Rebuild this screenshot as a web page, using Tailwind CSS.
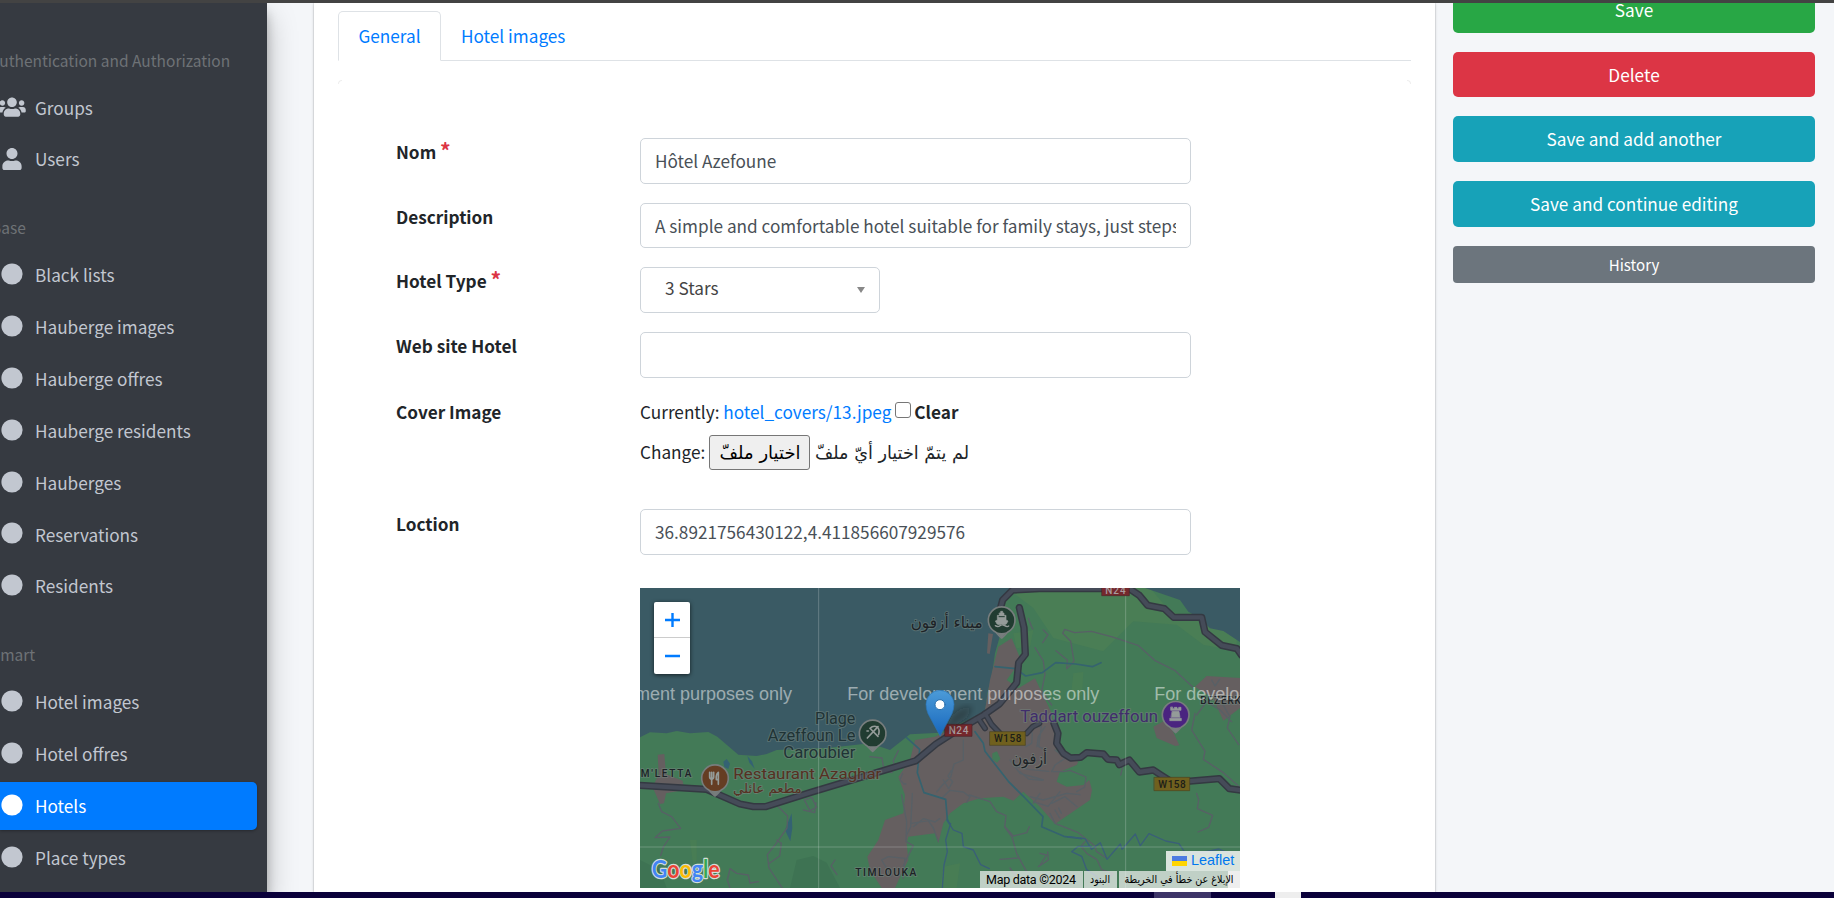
<!DOCTYPE html>
<html lang="en">
<head>
<meta charset="utf-8">
<title>Hotels | Change hotel</title>
<script src="https://cdn.jsdelivr.net/npm/@tailwindcss/browser@4"></script>
</head>
<body class="w-[1834px] h-[898px] overflow-hidden flex flex-col bg-[#f4f6f9] font-['Noto_Sans_CJK_SC','DejaVu_Sans',sans-serif] text-[17.200px] text-[#212529]">
<svg class="hidden">
  <symbol id="dot" viewBox="0 0 22 22"><circle cx="11" cy="11" r="10.6" fill="currentColor"/></symbol>
  <symbol id="users" viewBox="0 0 640 512"><path fill="currentColor" d="M96 224c35.300 0 64-28.700 64-64s-28.700-64-64-64-64 28.700-64 64 28.700 64 64 64zm448 0c35.300 0 64-28.700 64-64s-28.700-64-64-64-64 28.700-64 64 28.700 64 64 64zm32 32h-64c-17.600 0-33.500 7.100-45.100 18.600 40.300 22.100 68.900 62 75.100 109.400h66c17.700 0 32-14.300 32-32v-32c0-35.300-28.700-64-64-64zm-256 0c61.900 0 112-50.100 112-112S381.900 32 320 32 208 82.100 208 144s50.100 112 112 112zm76.800 32h-8.300c-20.800 10-43.900 16-68.500 16s-47.600-6-68.500-16h-8.300C179.600 288 128 339.600 128 403.200V432c0 26.500 21.500 48 48 48h288c26.500 0 48-21.500 48-48v-28.800c0-63.600-51.600-115.200-115.200-115.200zm-223.700-13.400C161.500 263.100 145.600 256 128 256H64c-35.300 0-64 28.700-64 64v32c0 17.700 14.300 32 32 32h65.900c6.300-47.400 34.900-87.300 75.200-109.400z"/></symbol>
  <symbol id="user" viewBox="0 0 448 512"><path fill="currentColor" d="M224 256c70.700 0 128-57.300 128-128S294.700 0 224 0 96 57.300 96 128s57.300 128 128 128zm89.600 32h-16.700c-22.200 10.200-46.900 16-72.900 16s-50.600-5.800-72.900-16h-16.700C60.200 288 0 348.200 0 422.400V464c0 26.500 21.500 48 48 48h352c26.500 0 48-21.500 48-48v-41.600c0-74.200-60.200-134.400-134.400-134.400z"/></symbol>
</svg>
<div class="h-[3px] shrink-0 bg-[#434343] relative z-20"></div>
<div class="flex flex-1 min-h-0">

  <aside class="w-[267px] shrink-0 bg-[#363a41] text-[#c2c7d0] pt-[16.300px] overflow-hidden relative z-10 shadow-[0_14px_28px_rgba(0,0,0,.25),0_10px_10px_rgba(0,0,0,.22)]">
    <div class="h-[64.200px] pt-[30.300px] text-[15.500px] leading-[20px] text-[#6e7276] whitespace-nowrap"><span class="-ml-[10px]">Authentication and Authorization</span></div>
    <nav class="flex flex-col gap-[3.840px] mb-[3.840px]">
      <a class="h-12 flex items-center"><span class="w-[35px] shrink-0"><svg class="w-[28px] h-[22px] -ml-[2px]"><use href="#users"/></svg></span>Groups</a>
      <a class="h-12 flex items-center"><span class="w-[35px] shrink-0"><svg class="w-[20px] h-[22px] ml-[2px]"><use href="#user"/></svg></span>Users</a>
    </nav>
    <div class="h-[64.200px] pt-[30.300px] text-[15.500px] leading-[20px] text-[#6e7276]"><span class="-ml-[9px]">Base</span></div>
    <nav class="flex flex-col gap-[3.840px] mb-[3.840px]">
      <a class="h-12 flex items-center"><span class="w-[35px] shrink-0"><svg class="size-[22px] ml-px -mt-[2px]"><use href="#dot"/></svg></span>Black lists</a>
      <a class="h-12 flex items-center"><span class="w-[35px] shrink-0"><svg class="size-[22px] ml-px -mt-[2px]"><use href="#dot"/></svg></span>Hauberge images</a>
      <a class="h-12 flex items-center"><span class="w-[35px] shrink-0"><svg class="size-[22px] ml-px -mt-[2px]"><use href="#dot"/></svg></span>Hauberge offres</a>
      <a class="h-12 flex items-center"><span class="w-[35px] shrink-0"><svg class="size-[22px] ml-px -mt-[2px]"><use href="#dot"/></svg></span>Hauberge residents</a>
      <a class="h-12 flex items-center"><span class="w-[35px] shrink-0"><svg class="size-[22px] ml-px -mt-[2px]"><use href="#dot"/></svg></span>Hauberges</a>
      <a class="h-12 flex items-center"><span class="w-[35px] shrink-0"><svg class="size-[22px] ml-px -mt-[2px]"><use href="#dot"/></svg></span>Reservations</a>
      <a class="h-12 flex items-center"><span class="w-[35px] shrink-0"><svg class="size-[22px] ml-px -mt-[2px]"><use href="#dot"/></svg></span>Residents</a>
    </nav>
    <div class="h-[64.200px] pt-[30.300px] text-[15.500px] leading-[20px] text-[#6e7276]"><span class="-ml-[9px]">Smart</span></div>
    <nav class="flex flex-col gap-[3.840px]">
      <a class="h-12 flex items-center"><span class="w-[35px] shrink-0"><svg class="size-[22px] ml-px -mt-[2px]"><use href="#dot"/></svg></span>Hotel images</a>
      <a class="h-12 flex items-center"><span class="w-[35px] shrink-0"><svg class="size-[22px] ml-px -mt-[2px]"><use href="#dot"/></svg></span>Hotel offres</a>
      <a class="h-12 w-[257px] flex items-center bg-[#007bff] text-white rounded-r-[5px] shadow-[0_1px_3px_rgba(0,0,0,.3)]"><span class="w-[35px] shrink-0"><svg class="size-[22px] ml-px -mt-[2px]"><use href="#dot"/></svg></span>Hotels</a>
      <a class="h-12 flex items-center"><span class="w-[35px] shrink-0"><svg class="size-[22px] ml-px -mt-[2px]"><use href="#dot"/></svg></span>Place types</a>
    </nav>
  </aside>

  <main class="ml-[47px] w-[1121px] shrink-0 bg-white px-6 pt-2 shadow-[0_0_1px_rgba(0,0,0,.3),0_1px_3px_rgba(0,0,0,.2)]">
    <div class="flex h-[50px] border-b border-[#dee2e6] w-[1073px] text-[#007bff]">
      <a class="h-[50px] w-[103px] border border-b-white border-[#dee2e6] rounded-t-[5px] bg-white flex items-center justify-center">General</a>
      <a class="h-[50px] px-[20px] flex items-center">Hotel images</a>
    </div>
    <div class="flex justify-between mt-[19px] h-[4px] w-[1073px]"><i class="w-1 border-t border-l border-[#eee] rounded-tl-[4px]"></i><i class="w-1 border-t border-r border-[#eee] rounded-tr-[4px]"></i></div>

    <form class="pl-[58px] pt-[54px]">
      <div class="flex h-[64.500px]">
        <label class="w-[244px] leading-[27px] font-bold">Nom <span class="text-[#dc3545] text-[21px] leading-[20px]">*</span></label>
        <div class="w-[551px] h-[45.600px] border border-[#ced4da] rounded-[5px] px-[14px] flex items-center text-[#495057]">Hôtel Azefoune</div>
      </div>
      <div class="flex h-[64.800px]">
        <label class="w-[244px] leading-[27px] font-bold">Description</label>
        <div class="w-[551px] h-[45.600px] border border-[#ced4da] rounded-[5px] px-[14px] flex items-center text-[#495057]"><span class="overflow-hidden whitespace-nowrap leading-[29px]">A simple and comfortable hotel suitable for family stays, just steps away from the beach</span></div>
      </div>
      <div class="flex h-[64.800px]">
        <label class="w-[244px] leading-[28px] font-bold">Hotel Type <span class="text-[#dc3545] text-[21px] leading-[20px]">*</span></label>
        <div class="w-[240px] h-[45.600px] border border-[#ced4da] rounded-[5px] pl-6 pr-[14px] flex items-start justify-between text-[#444] leading-[39px]">3 Stars<svg class="w-[8px] h-[6px] mt-[19px]" viewBox="0 0 8 6"><path d="M0 0h8L4 6z" fill="#888"/></svg></div>
      </div>
      <div class="flex h-[64.800px]">
        <label class="w-[244px] leading-[28px] font-bold">Web site Hotel</label>
        <div class="w-[551px] h-[45.600px] border border-[#ced4da] rounded-[5px]"></div>
      </div>
      <div class="flex h-[112.200px]">
        <label class="w-[244px] leading-[29px] font-bold">Cover Image</label>
        <div class="flex-1">
          <div class="flex leading-[29px] whitespace-pre">Currently: <span class="text-[#007bff]">hotel_covers/13.jpeg</span><span class="size-4 ml-[4px] mt-[5px] border border-[#767676] rounded-[3px]"></span><b class="ml-[3px]">Clear</b></div>
          <div class="flex items-center h-[35px] mt-[9px] whitespace-pre">Change: <span dir="rtl" class="w-[101px] h-[35px] bg-[#efefef] border border-[#767676] rounded-[3px] text-black flex items-center justify-center"><svg class="w-[82px] h-[33px]"><text x="41" y="23" font-size="18" text-anchor="middle" textLength="81" lengthAdjust="spacingAndGlyphs" font-family="DejaVu Sans">اختيار ملفّ</text></svg></span><svg class="w-[156px] h-[33px] ml-[4px]"><text x="78" y="23" font-size="18" text-anchor="middle" textLength="154" lengthAdjust="spacingAndGlyphs" fill="#212529" font-family="DejaVu Sans">لم يتمّ اختيار أيّ ملفّ</text></svg></div>
        </div>
      </div>
      <div class="flex">
        <label class="w-[244px] leading-[29px] font-bold">Loction</label>
        <div>
          <div class="w-[551px] h-[45.600px] border border-[#ced4da] rounded-[5px] px-[14px] flex items-center text-[#495057]">36.8921756430122,4.411856607929576</div>
          <div class="relative w-[600px] h-[300px] mt-[33.300px] overflow-hidden">
            <svg class="block w-[600px] h-[300px]" viewBox="30 24 1800 900" fill="none" stroke-linecap="round" stroke-linejoin="round">
              <rect x="30" y="24" width="1800" height="900" fill="#437a57"/>
              <path fill="#3e7353" d="M500 840l50-12 40 20 40 76H480zM30 840l60 30 20 54H30z"/>
              <path fill="#4a7e55" d="M1130 24h430l60 70 200 60v60l-100-20-80-60-130-10-90 90-150-40-60-90z"/>
              <path fill="#4d7e52" d="M1330 280l30-4-4 70-34 10zM1150 160l60-10-10 50-40 5zM940 860l50-10-10 74h-50zM180 780l20 0 0 60-10 20z" opacity=".6"/>
              <path fill="#3a5a64" d="M30 24H1155L1120 45 1108 80 1115 150 1095 220 1085 290 1072 340 1065 400 1030 412 930 458 840 463 780 510 720 490 600 503 440 510 410 522 380 528 325 524 262 470 235 456 180 460 140 453 110 460 60 457 30 472zM1545 24l105 36 25 35 35 20 30 30 40 8 50 33V24z"/>
              <path fill="#655f60" d="M855 480L915 470 1025 418 1063 402 1080 300 1105 200 1145 175 1173 240 1130 300 1165 325 1215 295 1265 400 1280 515 1345 545 1340 555 1290 575 1280 605 1310 620 1360 615 1378 600 1386 630 1380 660 1275 732 1230 680 1180 635 1150 662 1120 650 1050 655 1000 670 960 700 940 730 925 790 915 760 835 770 830 790 835 840 815 880 795 924H755L720 870 712 830 745 780 765 720 820 700 825 645 805 590 840 540z"/>
              <path fill="#655f60" d="M83 524l20-2 5 60 50 20 5 28-55 10-6 30-12 2-22-50 18-40zM1075 160l14 2-10 60-8-2zM1570 440l42-22 36 78-12 2-56-24zM1695 320l35-32 100 6v90l-50 38-30-66z"/>
              <path fill="#437a57" d="M1087 520l14-6 10 22-10 12-14-10z"/>
              <path fill="#346273" d="M280 545l10-8 10 14-5 16-12-6zM352 528l6 20 16 18-8-22zM485 700l-20 50 16 34 6-40z"/>

              <g stroke="#586066" stroke-width="4">
                <path d="M85 670l10 25 30 15 27 35-55 8-22 20 45-2-20 30-8 26M445 680l28 28-2 36-35 50-24 30 5 40 40 60M440 780l14 10-5 38-34 24M523 660l22-8 15 30-20 10zM520 690l34 8 4-30M300 924l-8-24 8-34 20 14 35 5 5 24 25-4M615 840l-12 18 18 26M720 530l36 4 6 36 24 8M805 512l-15 30 5 28M815 645l15 80-2 60 22 12-30 60M847 640l-5 100-12 25M850 740l30-24 35 10 14-10M845 730l50-8 15 22 15 40M755 840l20-10 50 5-5 60M755 840l30 50M1000 480v60l-28 12-10 40-22 20-20 24M940 600l16 26 12-20-14-18 10-16M935 655l25-24 40 5 20 15-10 16M818 580l-8 20 12 12h6"/>
                <path d="M1195 115l10 26 4 6M1240 150l14 14-16 24M1215 203l25 40 5 40-10 50 30 42M1278 212l34 28-2 26 22-22-10-60-24-24 6-12 30 10 50-4 60 16 80 26 50 45 60 30 54 50M1018 645l62 20 20 30 28 12-4 34 22 30 14 50 30 54M1125 740l25 28 40-10 8-18M1110 838l55-4M1225 860l30-20-2-24M1140 864l45 60M1230 820l20 5-20 30M1245 440l-20 30-4 30M1220 440h14l-8 60 12 6M1195 450l12 10-2 30-18 10M1275 510l30 25-30 20-10 20M1160 560l36 8 60 6M1170 575l26 22 40 4M1140 540l30 40 50 14 20 6M1200 650l40 10 70-20 40 4M1210 665l44 14 36-44M1230 640l-20 30M1265 670l40-20 36 30M1300 575l20-4 48 20-4 30-24 14M1275 690l14 24M1286 684l8 16M1300 575l-30 0M1260 700l15 30 70 28 50 40 4 16 30 20M1365 785l-12 14 18 22 30 18 14 30 34 12-20 20 10 20M1700 640l6 20-4 26 46 20-12 36-32 14M1695 400l-10 50 40 64-5 24 60 40 50 44M1700 405l30-40 40 25 35 35M1765 350l35 60-8 34 34 50M1745 300l10 18 14-20M1472 585l10-40-8-10"/>
              </g>
              <g stroke="#35636f" stroke-width="5">
                <path d="M829 472l40 36-7 70 20 60 65 20 5 60 10 20"/>
                <path d="M1035 455l25 35 5 24 70 90 50 50 54 56-4 30 70 30 50 6M1095 260l62 6 30 22 50-10 40-30 60 4 50 8 26-12"/>
              </g>
              <path stroke="#3a5f78" stroke-width="4" d="M962 730l-15 50 5 35-10 40-5 69M950 720l20 30 26 10 4 40 30 10 22 44 26 12M1315 770l50 6 20 32 26-20 20 50 40-46 5 16 40-46 15 35 26-36 50 22 40 8 20 30 50-4 50-10 45 20M1325 815l20-16 40 0M1325 815l30 14 15 40 30 20 20 35"/>
              <g stroke="#343942" stroke-width="22">
                <path d="M30 616l200 12 100 44 40 8h36l140-44 240-72 72-22 60-50 70-45 70-40 50-35 20-24 32-40 6-60 20-25-4-80-14-60M1110 90l8-30 30-30 80-4h270l30 20 25 30 50 10 28 26h84l10 44 50 40 46 10 14 20 20 4M1272 430l12 30-4 30 20 30 22 14 30-2 18-14 50 4 14 16 26 2 8 14 30-14 30 36 42-6 18 12 40 26 70-6 70-6 30 30 44 6"/>
                <path stroke-width="18" d="M1065 400l20 34 34 36M1045 415l20 30M1190 460l18-20 20-10"/>
              </g>
              <g stroke="#454b58" stroke-width="13">
                <path d="M30 616l200 12 100 44 40 8h36l140-44 240-72 72-22 60-50 70-45 70-40 50-35 20-24 32-40 6-60 20-25-4-80-14-60M1110 90l8-30 30-30 80-4h270l30 20 25 30 50 10 28 26h84l10 44 50 40 46 10 14 20 20 4M1272 430l12 30-4 30 20 30 22 14 30-2 18-14 50 4 14 16 26 2 8 14 30-14 30 36 42-6 18 12 40 26 70-6 70-6 30 30 44 6"/>
                <path stroke-width="10" d="M1065 400l20 34 34 36M1045 415l20 30M1190 460l18-20 20-10"/>
              </g>
              <path stroke="#fff" stroke-opacity=".22" stroke-width="3" d="M566 24v900M1487 24v900M30 801h1800"/>

              <g fill="#1d2226" stroke="#75857f" stroke-opacity=".5" stroke-width="6" paint-order="stroke" font-family="Roboto, sans-serif">
                <g font-size="47" text-anchor="end" fill="#1f3335"><text x="676" y="431" textLength="121" lengthAdjust="spacingAndGlyphs">Plage</text><text x="676" y="482" textLength="263" lengthAdjust="spacingAndGlyphs">Azeffoun Le</text><text x="676" y="533" textLength="216" lengthAdjust="spacingAndGlyphs">Caroubier</text></g>
                <text x="310" y="598" font-size="46" textLength="444" lengthAdjust="spacingAndGlyphs" fill="#563022">Restaurant Azaghar</text>
                <text x="412" y="640" font-size="38" text-anchor="middle" textLength="206" lengthAdjust="spacingAndGlyphs" fill="#563022" font-family="DejaVu Sans">مطعم عائلي</text>
                <text x="32" y="592" font-size="30" font-weight="500" textLength="152">M'LETTA</text>
                <text x="676" y="887" font-size="31" font-weight="500" textLength="183">TIMLOUKA</text>
                <text x="1711" y="371" font-size="30" font-weight="500" textLength="144">BEZERKA</text>
                <text x="1171" y="425" font-size="47" textLength="413" lengthAdjust="spacingAndGlyphs" fill="#402d6b">Taddart ouzeffoun</text>
                <text x="950" y="145" font-size="48" text-anchor="middle" textLength="216" lengthAdjust="spacingAndGlyphs" font-family="DejaVu Sans">ميناء أزفون</text>
                <text x="1198" y="551" font-size="48" text-anchor="middle" textLength="106" lengthAdjust="spacingAndGlyphs" font-family="DejaVu Sans">أزفون</text>
              </g>
              <g font-family="Roboto, sans-serif" font-size="30" font-weight="500" stroke-width="2">
                <path fill="#75282d" stroke="#4d2429" d="M1416 8h82v39h-82zM945 433h81v36h-81z"/>
                <path fill="#70601e" stroke="#4b4320" d="M1080 455h106v41h-106zM1573 592h106v40h-106z"/>
                <g fill="#a79b9d"><text x="1426" y="41" textLength="61">N24</text><text x="956" y="461" textLength="59">N24</text></g>
                <g fill="#1c1d18"><text x="1092" y="486" textLength="82">W158</text><text x="1585" y="623" textLength="82">W158</text></g>
              </g>

              <g stroke="#777d7d" stroke-width="5">
                <path fill="#213c31" d="M728 514c-10-8-14-16-22-20a40 40 0 1 1 44 0c-8 4-12 12-22 20z"/>
                <path fill="#653d23" d="M255 648c-10-8-14-16-22-20a40 40 0 1 1 44 0c-8 4-12 12-22 20z"/>
                <path fill="#213c31" d="M1115 174c-10-8-14-16-22-20a40 40 0 1 1 44 0c-8 4-12 12-22 20z"/>
                <path fill="#4a2480" d="M1637 458c-10-8-14-16-22-20a40 40 0 1 1 44 0c-8 4-12 12-22 20z"/>
              </g>
              <g fill="#777d7d"><path d="M728 514l-15-17q15 4 30 0zM255 648l-15-17q15 4 30 0zM1115 174l-15-17q15 4 30 0zM1637 458l-15-17q15 4 30 0z"/></g>
              <g stroke="#949b99" stroke-width="5">
                <path d="M712 474l32-34M722 447l22 22M720 445q10-10 22-4 8 8 4 22M711 453h4"/>
                <path d="M239 577v14q0 6 6 6t6-6v-14M245 577v36M265 613v-36q-8 6-6 22h6"/>
                <path fill="#949b99" stroke-width="2" d="M1108 99h4v-5h6v5h4v7h6v14l6 3-5 9q-7 5-14 0-7 5-14 0l-5-9 6-3v-14h6zM1622 382v9h31v-9h-7v4h-5v-4h-8v4h-5v-4zM1627 394h20l3 18h-26zM1620 415h34v7h-34z"/>
                <path stroke="#213c31" stroke-width="3" d="M1107 110h16"/>
                <path stroke-width="4" d="M1096 137q8 5 14 0t14 0 12 1"/>
              </g>
              <g fill="#fff" fill-opacity=".5" font-family="Liberation Sans" font-size="54">
                <text x="-270" y="360" textLength="756">For development purposes only</text>
                <text x="652" y="360" textLength="756">For development purposes only</text>
                <text x="1573" y="360" textLength="756">For development purposes only</text>
              </g>
              <defs><linearGradient id="pin" x1="0" y1="0" x2="0" y2="1"><stop stop-color="#4c9bd8"/><stop offset="1" stop-color="#1767bd"/></linearGradient><filter id="soft"><feGaussianBlur stdDeviation="9"/></filter></defs>
              <path d="M935 465l30-60q30-30 62-24l-16 34z" fill="#111" fill-opacity=".35" filter="url(#soft)"/>
              <path d="M930 467l-36-66q-6-14-6-28a42 42 0 0 1 84 0q0 14-6 28z" fill="url(#pin)" stroke="#2a74b5" stroke-width="2"/>
              <circle cx="930" cy="374" r="15" fill="#fff" stroke="#2a70ad" stroke-width="3"/>
              <text x="65" y="895" font-family="Lato, sans-serif" font-weight="bold" font-size="72" textLength="204" lengthAdjust="spacingAndGlyphs" stroke="#d3ded8" stroke-width="7" paint-order="stroke"><tspan fill="#4285f4">G</tspan><tspan fill="#ea4335">o</tspan><tspan fill="#fbbc05">o</tspan><tspan fill="#4285f4">g</tspan><tspan fill="#34a853">l</tspan><tspan fill="#ea4335">e</tspan></text>
            </svg>
            <div class="absolute left-[14px] top-[14px] w-9 h-[72px] bg-white rounded-[2px] shadow-[0_1px_4px_rgba(0,0,0,.65)]">
              <svg class="size-full" viewBox="0 0 36 72"><path d="M11 18h15M18.500 11v14M11 54h15" stroke="#007bff" stroke-width="2.400"/><path d="M0 35.500h36" stroke="#ccc"/></svg>
            </div>
            <div class="absolute right-0 bottom-0 flex flex-col items-end font-['Liberation_Sans','DejaVu_Sans',sans-serif] text-black">
              <div class="h-5 w-[74px] bg-white/80 flex items-center pl-[6px] gap-[4px] text-[14.400px] text-[#0078ee]"><svg class="w-[15px] h-[10px]"><rect width="15" height="5" fill="#4c7be1"/><rect y="5" width="15" height="5" fill="#ffd500"/></svg>Leaflet</div>
              <div class="flex gap-px h-[17px] text-[12px]">
                <div class="w-[103px] bg-[#f5f5f5]/70"><svg class="w-[103px] h-[17px]"><text x="6" y="13" font-family="Roboto" font-size="12.500" textLength="90">Map data ©2024</text></svg></div>
                <div class="w-[33px] bg-[#f5f5f5]/70"><svg class="w-[33px] h-[17px]"><text x="16" y="12" font-size="11" text-anchor="middle" textLength="20" lengthAdjust="spacingAndGlyphs" font-family="DejaVu Sans">البنود</text></svg></div>
                <div class="w-[121px] ml-px bg-[#f5f5f5]/70 relative"><div class="absolute right-0 top-0 w-3 h-full bg-[#eee]"></div><svg class="relative w-[121px] h-[17px]"><text x="60" y="12" font-size="11" text-anchor="middle" textLength="109" lengthAdjust="spacingAndGlyphs" font-family="DejaVu Sans">الإبلاغ عن خطأ في الخريطة</text></svg></div>
              </div>
            </div>
          </div>
        </div>
      </div>
    </form>
  </main>

  <aside class="ml-[18px] w-[362px] flex flex-col text-white -mt-[16px]">
    <button class="h-[46px] shrink-0 mb-[19px] rounded-[5px] bg-[#28a745] pb-px">Save</button>
    <button class="h-[45px] shrink-0 mb-[19px] rounded-[5px] bg-[#dc3545]">Delete</button>
    <button class="h-[46px] shrink-0 mb-[19px] rounded-[5px] bg-[#17a2b8]">Save and add another</button>
    <button class="h-[46px] shrink-0 mb-[19px] rounded-[5px] bg-[#17a2b8]">Save and continue editing</button>
    <button class="h-[37px] shrink-0 rounded-[4px] bg-[#6c757d] text-[15.100px]">History</button>
  </aside>
</div>
<div class="h-[6px] shrink-0 bg-[#0a003a] relative z-20 flex"><i class="ml-[1154px] w-[57px] bg-[#3d3468]"></i><i class="ml-[64px] w-[26px] bg-[#eee]"></i></div>
</body>
</html>
